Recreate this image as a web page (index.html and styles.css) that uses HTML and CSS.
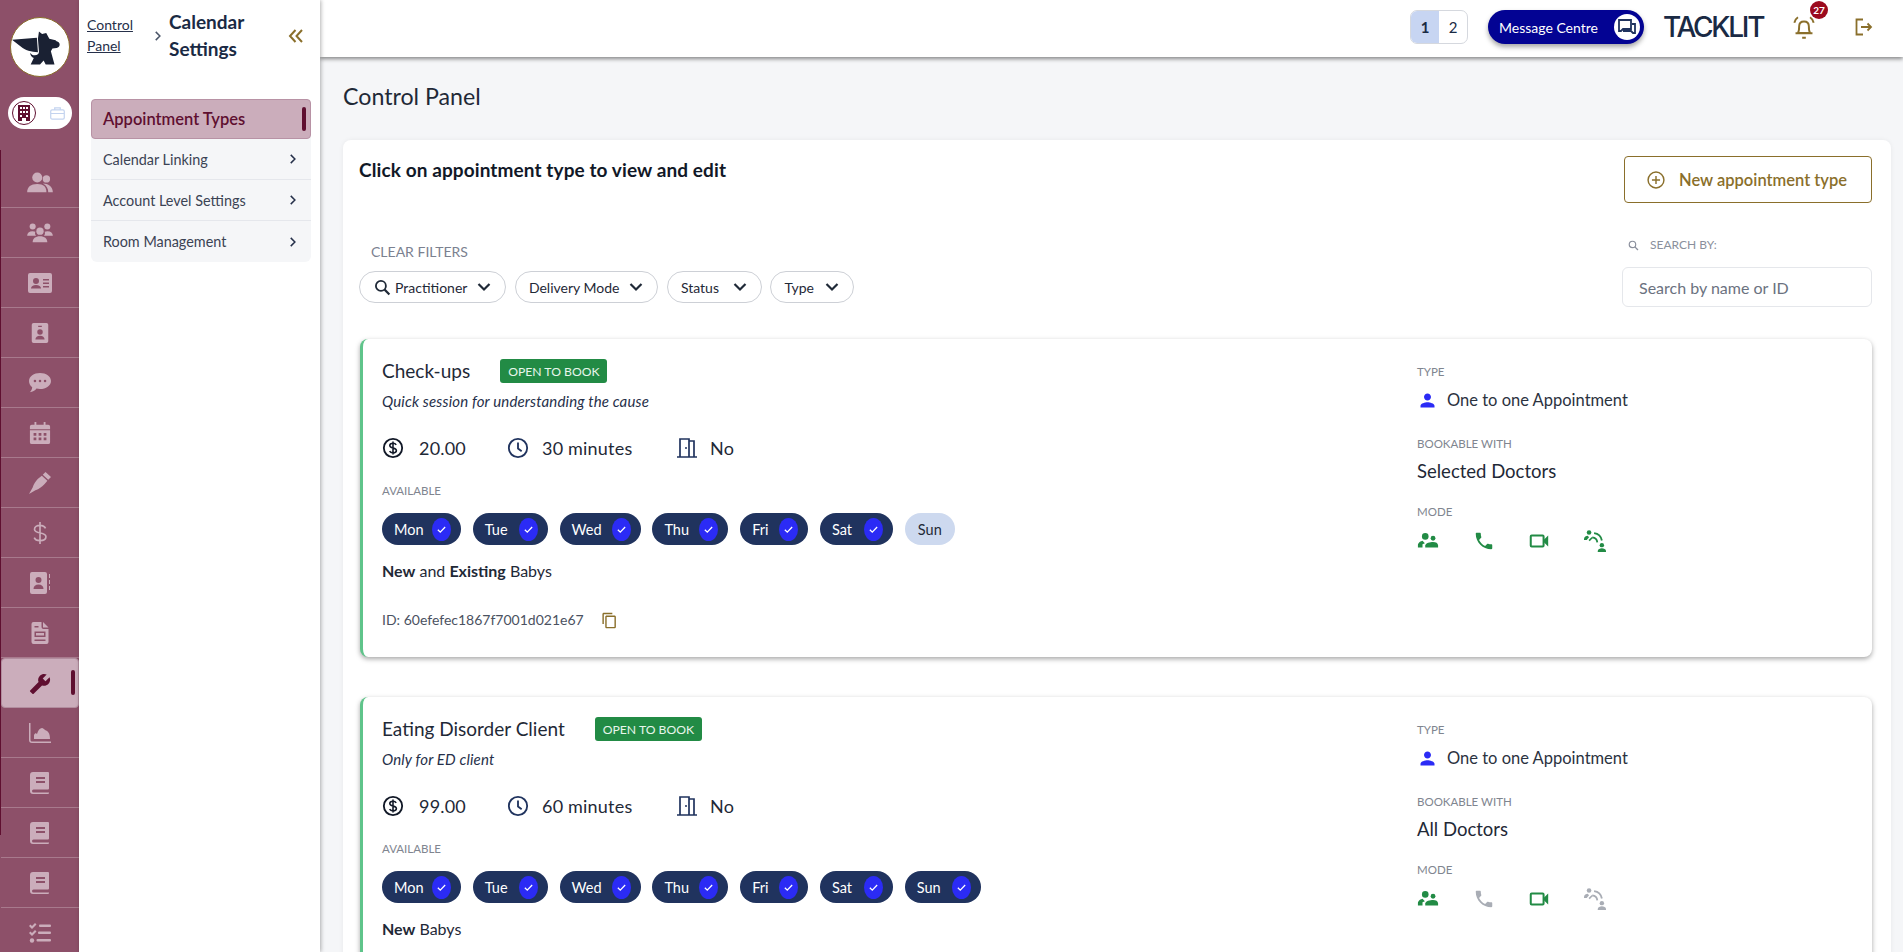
FILE: index.html
```html
<!DOCTYPE html>
<html lang="en">
<head>
<meta charset="utf-8">
<title>Calendar Settings</title>
<link rel="stylesheet" href="styles.css">
</head>
<body>
<svg class="defs" aria-hidden="true">
  <symbol id="i-person" viewBox="0 0 24 24"><path d="M12 12c2.21 0 4-1.79 4-4s-1.79-4-4-4-4 1.79-4 4 1.79 4 4 4zm0 2c-2.67 0-8 1.34-8 4v2h16v-2c0-2.66-5.33-4-8-4z"/></symbol>
  <symbol id="i-phone" viewBox="0 0 24 24"><path d="M6.62 10.79c1.44 2.83 3.76 5.14 6.59 6.59l2.2-2.2c.27-.27.67-.36 1.02-.24 1.12.37 2.33.57 3.57.57.55 0 1 .45 1 1V20c0 .55-.45 1-1 1-9.39 0-17-7.61-17-17 0-.55.45-1 1-1h3.5c.55 0 1 .45 1 1 0 1.25.2 2.45.57 3.57.11.35.03.74-.25 1.02l-2.2 2.2z"/></symbol>
  <symbol id="i-people" viewBox="0 0 24 24"><circle cx="9" cy="7" r="3.6"/><circle cx="17.5" cy="9" r="2.6"/><path d="M1 19v-2.5c0-2.6 3.5-4.5 5-4.7l2.6 2.6-2.6 1.2V19H1z"/><path d="M9 19v-2c0-2.6 5.5-3.8 8.5-3.8S23 14.400 23 17v2H9z"/></symbol>
  <symbol id="i-video" viewBox="0 0 24 24"><rect x="3" y="6" width="14" height="12" rx="1" fill="none" stroke="currentColor" stroke-width="2.200"/><path d="M17 11l5-5v12l-5-5z"/></symbol>
  <symbol id="i-remote" viewBox="0 0 24 24"><circle cx="5.500" cy="2.800" r="2.500"/><path d="M0 11v-1.500c0-2 2.500-3.200 4-3.200l1.500 1.500L3 11H0z"/><path d="M5 11l3.500-3.500 1.200 1.200L6.200 12.200z"/><path d="M11 3.500a10 10 0 0 1 8.500 8M9 8a6 6 0 0 1 5.500 5.500" fill="none" stroke="currentColor" stroke-width="2"/><circle cx="19.500" cy="16.500" r="2.400"/><path d="M15 24v-1c0-2 2.500-3 4.500-3s4.500 1 4.500 3v1z"/></symbol>
  <symbol id="i-check" viewBox="0 0 16 16"><path d="M3.500 8.300l3 3L12.500 5" fill="none" stroke="#fff" stroke-width="1.600"/></symbol>
  <symbol id="i-chev" viewBox="0 0 16 16"><path d="M2.500 5l5.500 5.500L13.500 5" fill="none" stroke="currentColor" stroke-width="2.200"/></symbol>
  <symbol id="i-right" viewBox="0 0 16 16"><path d="M5 2.500l5.500 5.500L5 13.500" fill="none" stroke="currentColor" stroke-width="2"/></symbol>
  <symbol id="i-money" viewBox="0 0 24 24"><circle cx="12" cy="12" r="10" fill="none" stroke="currentColor" stroke-width="2"/><path d="M15.500 8.500c-.7-1.200-2-1.700-3.500-1.700-2 0-3.500 1-3.500 2.600 0 3.600 7.200 1.700 7.200 5.300 0 1.600-1.600 2.600-3.700 2.600-1.600 0-3-.6-3.700-1.900M12 4.800v14.400" fill="none" stroke="currentColor" stroke-width="1.700"/></symbol>
  <symbol id="i-clock" viewBox="0 0 24 24"><circle cx="12" cy="12" r="10" fill="none" stroke="currentColor" stroke-width="2"/><path d="M12 6v6.500l4 3" fill="none" stroke="currentColor" stroke-width="2"/></symbol>
  <symbol id="i-door" viewBox="0 0 20 20"><path d="M0 19h20M3 19V1h9v18M12 3h5v16" fill="none" stroke="currentColor" stroke-width="1.700"/><circle cx="9" cy="10" r="1"/></symbol>
  <symbol id="i-copy" viewBox="0 0 24 24"><path d="M16 1H4c-1.100 0-2 .9-2 2v14h2V3h12V1zm3 4H8c-1.100 0-2 .9-2 2v14c0 1.100.9 2 2 2h11c1.100 0 2-.9 2-2V7c0-1.100-.9-2-2-2zm0 16H8V7h11v14z"/></symbol>
  <symbol id="i-search" viewBox="0 0 16 16"><circle cx="6.500" cy="6.500" r="4.700" fill="none" stroke="currentColor" stroke-width="1.700"/><path d="M10 10l4.500 4.500" stroke="currentColor" stroke-width="2" fill="none"/></symbol>
  <symbol id="r-friends" viewBox="0 0 28 24"><circle cx="11" cy="6" r="5.500"/><circle cx="21" cy="7.500" r="4"/><path d="M0 22c0-6 4-9 11-9s10 3 10 9H0z"/><path d="M17 12.500c6 0 11 3.500 11 9.500h-5c0-4-2-7.500-6-9.500z"/></symbol>
  <symbol id="r-group" viewBox="0 0 28 24"><circle cx="6" cy="5" r="3.300"/><circle cx="22" cy="5" r="3.300"/><circle cx="14" cy="10" r="4"/><path d="M0 15c0-3 2-5 6-5 1 0 2 .2 3 .6-.8 1.300-.5 3 .7 4.400H0zM28 15c0-3-2-5-6-5-1 0-2 .2-3 .6.800 1.300.5 3-.7 4.400H28zM6 22c0-4 3-6.500 8-6.500s8 2.500 8 6.500H6z"/></symbol>
  <symbol id="r-card" viewBox="0 0 24 20"><path fill-rule="evenodd" d="M2 0h20a2 2 0 0 1 2 2v16a2 2 0 0 1-2 2H2a2 2 0 0 1-2-2V2a2 2 0 0 1 2-2zm6 5a3 3 0 1 0 0 6 3 3 0 0 0 0-6zM3 15.500h10c0-2.200-2-3.500-5-3.500s-5 1.300-5 3.500zM15 6v1.500h6V6h-6zm0 3.500V11h6V9.500h-6zm0 3.500v1.500h6V13h-6z"/></symbol>
  <symbol id="r-badge" viewBox="0 0 18 24"><path fill-rule="evenodd" d="M2 1h14a2 2 0 0 1 2 2v18a2 2 0 0 1-2 2H2a2 2 0 0 1-2-2V3a2 2 0 0 1 2-2zm5 3v1.500h4V4H7zm2 4a3 3 0 1 0 0 6 3 3 0 0 0 0-6zm-5 11h10c0-2.500-2-4-5-4s-5 1.500-5 4z"/></symbol>
  <symbol id="r-chat" viewBox="0 0 24 22"><path fill-rule="evenodd" d="M12 0c6.600 0 12 3.800 12 8.800s-5.400 8.800-12 8.800c-1.400 0-2.600-.2-3.800-.5C6.500 19.500 4 20.500.8 21 2.500 19.500 3.300 17.600 3.500 15.500 1.300 13.800 0 11.500 0 8.800 0 3.800 5.400 0 12 0zM6.500 7.500a1.400 1.400 0 1 0 0 2.800 1.400 1.400 0 0 0 0-2.800zm5.500 0a1.400 1.400 0 1 0 0 2.800 1.400 1.400 0 0 0 0-2.800zm5.500 0a1.400 1.400 0 1 0 0 2.800 1.400 1.400 0 0 0 0-2.800z"/></symbol>
  <symbol id="r-cal" viewBox="0 0 22 24"><path fill-rule="evenodd" d="M5 0h2v3h8V0h2v3h3a2 2 0 0 1 2 2v3H0V5a2 2 0 0 1 2-2h3V0zM0 9h22v13a2 2 0 0 1-2 2H2a2 2 0 0 1-2-2V9zm4 3v3h3v-3H4zm5.500 0v3h3v-3h-3zm5.500 0v3h3v-3h-3zM4 17v3h3v-3H4zm5.500 0v3h3v-3h-3zm5.500 0v3h3v-3h-3z"/></symbol>
  <symbol id="r-pen" viewBox="0 0 24 24"><path d="M18 0l6 5.500-3 3-6-5.500 3-3zM14 4l6 5.500c-1 1.500-2.500 3-3.500 4-2.500 2.500-5.500 5-9.500 6.500L0 24l4-7c1-4 3.500-7 5.500-9.500z"/></symbol>
  <symbol id="r-dollar" viewBox="0 0 16 24"><path d="M14 7c-.8-2-3-3.300-6-3.300-3.500 0-6 1.600-6 4.200 0 5.800 12.500 2.500 12.500 8.200 0 2.700-2.800 4.200-6.500 4.200-3 0-5.500-1.300-6.300-3.300M8 0v24" fill="none" stroke="currentColor" stroke-width="1.800"/></symbol>
  <symbol id="r-contact" viewBox="0 0 20 22"><path fill-rule="evenodd" d="M2 0h13a2 2 0 0 1 2 2v18a2 2 0 0 1-2 2H2a2 2 0 0 1-2-2V2a2 2 0 0 1 2-2zm6.500 5a3 3 0 1 0 0 6 3 3 0 0 0 0-6zm-5 12h10c0-2.800-2-4.500-5-4.500s-5 1.700-5 4.500z"/><path d="M19 2h1v4h-1zM19 8h1v4h-1zM19 14h1v4h-1z"/></symbol>
  <symbol id="r-doc" viewBox="0 0 17 22"><path fill-rule="evenodd" d="M2 0h8v5a2 2 0 0 0 2 2h5v13a2 2 0 0 1-2 2H2a2 2 0 0 1-2-2V2a2 2 0 0 1 2-2zm1 4v1.500h4V4H3zm0 5.500V15h11V9.500H3zm1.500 1.500h8v2.500h-8V11zM3 17.500V19h11v-1.500H3z"/><path d="M11.500 0L17 5.500h-5.500z"/></symbol>
  <symbol id="r-wrench" viewBox="0 0 24 24"><path transform="translate(24 0) scale(-1 1)" d="M22.700 19l-9.100-9.100c.9-2.300.4-5-1.500-6.900-2-2-5-2.400-7.400-1.300L9 6 6 9 1.600 4.700C.4 7.100.9 10.100 2.900 12.100c1.900 1.900 4.600 2.400 6.900 1.500l9.100 9.100c.4.400 1 .4 1.400 0l2.300-2.300c.5-.4.500-1.100.1-1.400z"/></symbol>
  <symbol id="r-chart" viewBox="0 0 22 20"><path d="M0 0h1.500v17c0 .8.700 1.500 1.500 1.500h19V20H3a3 3 0 0 1-3-3V0z"/><path d="M5 16v-4c1-2 2-2 3-1 1-4 3-6 5-6 1 0 2 1 3 2 3 1 5 3 5 9H5z"/></symbol>
  <symbol id="r-book" viewBox="0 0 20 22"><path fill-rule="evenodd" d="M3 0h15a1 1 0 0 1 1 1v15.500a1 1 0 0 1-1 1H3.500a1.500 1.500 0 0 0 0 3H19c0 .5 0 1.500-1 1.500H3a3 3 0 0 1-3-3V3a3 3 0 0 1 3-3zm3 5v2h9V5H6zm0 4v2h9V9H6z"/></symbol>
  <symbol id="r-list" viewBox="0 0 22 20"><path d="M0 3l1.500-1.500L3 3l3-3 1.500 1.500L3 6zM0 10l1.500-1.500L3 10l3-3 1.500 1.500L3 13z"/><circle cx="3" cy="17.500" r="2.200"/><rect x="10" y="1.500" width="12" height="2.400" rx="1"/><rect x="9" y="8.500" width="13" height="2.400" rx="1"/><rect x="7.500" y="16" width="14.500" height="2.400" rx="1"/></symbol>
</svg>

<div class="app">
  <aside class="rail">
    <div class="logo">
      <svg viewBox="0 0 56 56" width="58" height="58">
        <path class="logo-dog" d="M1 21L25 19l1 14c-6 0-13-2-16-5z"/>
        <path class="logo-dog" d="M26 20l1-7 3 2.500 4-1 3 5.500 6 1.500 1 1c4 .5 4 6 0 6.500l-4 .5-1.500 2.500L42 45H33.500l-2-4-3.500 4H19l3-6.500c-2-.5-3.500-2.500-3.500-5 1 1.500 2.500 2.500 4.500 2.500 2.500 0 4-1.500 4-3.500z"/>
      </svg>
    </div>
    <div class="org-toggle">
      <span class="org-on">
        <svg viewBox="0 0 12 16" width="12" height="16"><path d="M0 0h12v16H8v-3H4v3H0z" fill="#5f0f30"/><path d="M2 2h2v2H2zM5 2h2v2H5zM8 2h2v2H8zM2 6h2v2H2zM5 6h2v2H5zM8 6h2v2H8zM2 10h2v2H2zM8 10h2v2H8z" fill="#fff"/></svg>
      </span>
      <svg class="org-off" viewBox="0 0 16 14" width="15" height="13"><rect x=".7" y="3" width="14.600" height="10" rx="1.500" fill="none" stroke="currentColor" stroke-width="1.300"/><path d="M5 3V1h6v2M1 7h14" fill="none" stroke="currentColor" stroke-width="1.300"/></svg>
    </div>
    <nav class="rail-nav">
      <a class="rail-item"><svg class="ri ri-26"><use href="#r-friends"/></svg></a>
      <a class="rail-item"><svg class="ri ri-26"><use href="#r-group"/></svg></a>
      <a class="rail-item"><svg class="ri ri-24"><use href="#r-card"/></svg></a>
      <a class="rail-item"><svg class="ri ri-22"><use href="#r-badge"/></svg></a>
      <a class="rail-item"><svg class="ri ri-22"><use href="#r-chat"/></svg></a>
      <a class="rail-item"><svg class="ri ri-22"><use href="#r-cal"/></svg></a>
      <a class="rail-item"><svg class="ri ri-22"><use href="#r-pen"/></svg></a>
      <a class="rail-item"><svg class="ri ri-24"><use href="#r-dollar"/></svg></a>
      <a class="rail-item"><svg class="ri ri-22"><use href="#r-contact"/></svg></a>
      <a class="rail-item"><svg class="ri ri-22"><use href="#r-doc"/></svg></a>
      <a class="rail-item rail-active"><svg class="ri ri-22"><use href="#r-wrench"/></svg></a>
      <a class="rail-item"><svg class="ri ri-22"><use href="#r-chart"/></svg></a>
      <a class="rail-item"><svg class="ri ri-22"><use href="#r-book"/></svg></a>
      <a class="rail-item"><svg class="ri ri-22"><use href="#r-book"/></svg></a>
      <a class="rail-item"><svg class="ri ri-22"><use href="#r-book"/></svg></a>
      <a class="rail-item"><svg class="ri ri-22"><use href="#r-list"/></svg></a>
    </nav>
  </aside>

  <aside class="subnav">
    <div class="crumbs">
      <a class="crumb-link">Control Panel</a>
      <svg class="crumb-sep"><use href="#i-right"/></svg>
      <h2 class="crumb-title">Calendar Settings</h2>
      <svg class="collapse" viewBox="0 0 16 14" width="16" height="14"><path d="M7.500 1L2 7l5.500 6M14 1L8.500 7l5.500 6" fill="none" stroke="currentColor" stroke-width="2"/></svg>
    </div>
    <ul class="menu">
      <li class="menu-item menu-active">Appointment Types</li>
      <li class="menu-item">Calendar Linking<svg class="menu-chev"><use href="#i-right"/></svg></li>
      <li class="menu-item">Account Level Settings<svg class="menu-chev"><use href="#i-right"/></svg></li>
      <li class="menu-item">Room Management<svg class="menu-chev"><use href="#i-right"/></svg></li>
    </ul>
  </aside>

  <div class="main">
    <header class="topbar">
      <div class="page-toggle"><span class="page-on">1</span><span class="page-off">2</span></div>
      <button class="msg-btn">Message Centre
        <span class="msg-icon"><svg viewBox="0 0 18 16" width="18" height="16"><path d="M1 1h12v9H5l-2 2H1zM5 12h8l2 2h2V5h-3" fill="none" stroke="#20335e" stroke-width="1.800"/></svg></span>
      </button>
      <div class="brand">TACKLIT</div>
      <div class="bell">
        <svg viewBox="2 1.500 18 19" width="22" height="23"><path d="M6 15.500c1-1.500 1-3 1-5.500 0-2.500 1.500-4 4-4s4 1.500 4 4c0 2.500 0 4 1 5.500zM4 15.800h14M9.500 19.500h3M3 7c.5-2 1.500-3.500 3-4.500M19 7c-.5-2-1.500-3.500-3-4.500" fill="none" stroke="currentColor" stroke-width="1.600"/></svg>
        <span class="bell-count">27</span>
      </div>
      <svg class="logout" viewBox="0 0 18 18" width="18" height="18"><path d="M8 1.500H1.500v15H8M6 9h10M12.500 5.500L16 9l-3.500 3.500" fill="none" stroke="currentColor" stroke-width="1.800"/></svg>
    </header>

    <main class="content">
      <h1 class="page-title">Control Panel</h1>
      <section class="panel">
        <div class="panel-head">
          <h3 class="panel-title">Click on appointment type to view and edit</h3>
          <button class="new-btn">
            <svg viewBox="0 0 20 20" width="18" height="18"><circle cx="10" cy="10" r="8.800" fill="none" stroke="currentColor" stroke-width="1.600"/><path d="M10 5.500v9M5.500 10h9" stroke="currentColor" stroke-width="1.600" fill="none"/></svg>
            New appointment type
          </button>
        </div>
        <div class="filters">
          <div class="filter-left">
            <div class="clear">CLEAR FILTERS</div>
            <div class="pills">
              <span class="pill pill-search"><svg class="pill-s"><use href="#i-search"/></svg>Practitioner<svg class="pill-c"><use href="#i-chev"/></svg></span>
              <span class="pill">Delivery Mode<svg class="pill-c"><use href="#i-chev"/></svg></span>
              <span class="pill pill-status">Status<svg class="pill-c"><use href="#i-chev"/></svg></span>
              <span class="pill pill-type">Type<svg class="pill-c"><use href="#i-chev"/></svg></span>
            </div>
          </div>
          <div class="filter-right">
            <div class="search-label"><svg class="search-s"><use href="#i-search"/></svg>SEARCH BY:</div>
            <input class="search-input" type="text" placeholder="Search by name or ID">
          </div>
        </div>

        <article class="appt">
          <div class="appt-left">
            <div class="appt-head"><span class="appt-name">Check-ups</span><span class="badge">OPEN TO BOOK</span></div>
            <p class="appt-desc">Quick session for understanding the cause</p>
            <div class="stats">
              <span class="stat stat-price"><svg class="st-i st-money"><use href="#i-money"/></svg>20.00</span>
              <span class="stat stat-time"><svg class="st-i"><use href="#i-clock"/></svg>30 minutes</span>
              <span class="stat"><svg class="st-i st-door"><use href="#i-door"/></svg>No</span>
            </div>
            <div class="cap cap-avail">AVAILABLE</div>
            <div class="days">
              <span class="day d-mon">Mon<i class="tick"><svg><use href="#i-check"/></svg></i></span>
              <span class="day d-tue">Tue<i class="tick"><svg><use href="#i-check"/></svg></i></span>
              <span class="day d-wed">Wed<i class="tick"><svg><use href="#i-check"/></svg></i></span>
              <span class="day d-thu">Thu<i class="tick"><svg><use href="#i-check"/></svg></i></span>
              <span class="day d-fri">Fri<i class="tick"><svg><use href="#i-check"/></svg></i></span>
              <span class="day d-sat">Sat<i class="tick"><svg><use href="#i-check"/></svg></i></span>
              <span class="day day-off">Sun</span>
            </div>
            <p class="clients"><b>New</b> and <b>Existing</b> Babys</p>
            <div class="appt-id">ID: 60efefec1867f7001d021e67<svg class="copy"><use href="#i-copy"/></svg></div>
          </div>
          <div class="appt-right">
            <div class="cap">TYPE</div>
            <div class="type-row"><svg class="type-i"><use href="#i-person"/></svg>One to one Appointment</div>
            <div class="cap cap-book">BOOKABLE WITH</div>
            <div class="bookable">Selected Doctors</div>
            <div class="cap cap-mode">MODE</div>
            <div class="modes">
              <svg class="mode"><use href="#i-people"/></svg>
              <svg class="mode"><use href="#i-phone"/></svg>
              <svg class="mode"><use href="#i-video"/></svg>
              <svg class="mode"><use href="#i-remote"/></svg>
            </div>
          </div>
        </article>

        <article class="appt">
          <div class="appt-left">
            <div class="appt-head"><span class="appt-name">Eating Disorder Client</span><span class="badge">OPEN TO BOOK</span></div>
            <p class="appt-desc">Only for ED client</p>
            <div class="stats">
              <span class="stat stat-price"><svg class="st-i st-money"><use href="#i-money"/></svg>99.00</span>
              <span class="stat stat-time"><svg class="st-i"><use href="#i-clock"/></svg>60 minutes</span>
              <span class="stat"><svg class="st-i st-door"><use href="#i-door"/></svg>No</span>
            </div>
            <div class="cap cap-avail">AVAILABLE</div>
            <div class="days">
              <span class="day d-mon">Mon<i class="tick"><svg><use href="#i-check"/></svg></i></span>
              <span class="day d-tue">Tue<i class="tick"><svg><use href="#i-check"/></svg></i></span>
              <span class="day d-wed">Wed<i class="tick"><svg><use href="#i-check"/></svg></i></span>
              <span class="day d-thu">Thu<i class="tick"><svg><use href="#i-check"/></svg></i></span>
              <span class="day d-fri">Fri<i class="tick"><svg><use href="#i-check"/></svg></i></span>
              <span class="day d-sat">Sat<i class="tick"><svg><use href="#i-check"/></svg></i></span>
              <span class="day d-sun">Sun<i class="tick"><svg><use href="#i-check"/></svg></i></span>
            </div>
            <p class="clients"><b>New</b> Babys</p>
          </div>
          <div class="appt-right">
            <div class="cap">TYPE</div>
            <div class="type-row"><svg class="type-i"><use href="#i-person"/></svg>One to one Appointment</div>
            <div class="cap cap-book">BOOKABLE WITH</div>
            <div class="bookable">All Doctors</div>
            <div class="cap cap-mode">MODE</div>
            <div class="modes">
              <svg class="mode"><use href="#i-people"/></svg>
              <svg class="mode mode-off"><use href="#i-phone"/></svg>
              <svg class="mode"><use href="#i-video"/></svg>
              <svg class="mode mode-off"><use href="#i-remote"/></svg>
            </div>
          </div>
        </article>
      </section>
    </main>
  </div>
</div>
</body>
</html>
```

FILE: styles.css
```css
* { box-sizing: border-box; }
html, body { margin: 0; height: 100%; overflow: hidden; }
body { font-family: "Lato", "Noto Sans", sans-serif; color: #1a2a44; font-size: 14px; }
h1, h2, h3, p, ul { margin: 0; padding: 0; }
.defs { display: none; }
svg { display: block; fill: currentColor; flex: none; }

.app { display: flex; height: 952px; }

/* Rail */
.rail { width: 79px; flex: none; background: #8d5069; display: flex; flex-direction: column; align-items: center; }
.logo { width: 60px; height: 60px; flex: none; margin-top: 17px; border-radius: 50%; background: #fff; border: 1px solid #8a6f2b; display: flex; align-items: center; justify-content: center; }
.logo-dog { fill: #1a2133; }
.org-toggle { width: 64px; height: 32px; flex: none; margin-top: 20px; border-radius: 16px; background: #fff; display: flex; align-items: center; padding-left: 4px; gap: 14px; }
.org-on { width: 24px; height: 24px; border-radius: 50%; border: 1.500px solid #5f0f30; display: flex; align-items: center; justify-content: center; }
.org-off { color: #c3d3ef; }
.rail-nav { position: relative; align-self: stretch; flex: none; margin-top: 21px; padding-top: 8px; }
.rail-nav::before { content: ""; position: absolute; left: 0; top: 0; width: 1px; height: 685px; background: #5f0f30; }
.rail-item { height: 50px; display: flex; align-items: center; justify-content: center; padding-top: 1px; color: #cbadbb; border-bottom: 1px solid #a87a8d; margin-left: 1px; }
.rail-active { background: #cbadbb; color: #5f0f30; border: 1px solid #b28d9e; border-radius: 4px; position: relative; }
.rail-active::after { content: ""; position: absolute; right: 3px; top: 11px; width: 4px; height: 25px; border-radius: 2px; background: #5f0f30; }
.ri-26 { width: 26px; height: 22px; }
.ri-24 { width: 24px; height: 22px; }
.ri-22 { width: 22px; height: 22px; }

/* Subnav */
.subnav { width: 241px; flex: none; background: #fff; box-shadow: 1px 0 4px rgba(0, 0, 0, .3); position: relative; z-index: 2; padding-left: 8px; padding-right: 8px; }
.crumbs { height: 99px; display: flex; align-items: flex-start; padding-top: 8px; }
.crumb-link { width: 56px; font-size: 14px; line-height: 21px; text-decoration: underline; margin-top: 6px; color: #26304a; }
.crumb-sep { width: 12px; height: 12px; margin: 22px 5px 0 9px; color: #4a5568; }
.crumb-title { width: 112px; font-size: 19px; font-weight: 700; line-height: 27px; color: #1a2a44; }
.collapse { color: #8a6f2b; margin: 21px 0 0 7px; }
.menu { list-style: none; margin-left: 4px; width: 220px; background: #f5f6f8; border-radius: 6px; }
.menu-item { height: 41px; display: flex; align-items: center; justify-content: space-between; padding: 0 12px 0 12px; font-size: 14.400px; color: #3b4354; border-bottom: 1px solid #e5e7ec; }
.menu-item:last-child { border-bottom: 0; }
.menu-active { height: 40px; position: relative; background: #cbadbb; border: 1px solid #b892a5; border-radius: 4px; color: #5f0f30; font-size: 16.500px; font-weight: 600; padding-left: 11px; }
.menu-active::after { content: ""; position: absolute; right: 4px; top: 7px; width: 4px; height: 24px; border-radius: 2px; background: #5f0f30; }
.menu-chev { width: 12px; height: 12px; color: #26304a; }

/* Main */
.main { flex: 1; min-width: 0; display: flex; flex-direction: column; background: #f5f6f8; }
.topbar { height: 57px; flex: none; background: #fff; box-shadow: 0 2px 4px rgba(0, 0, 0, .45); position: relative; z-index: 1; display: flex; align-items: flex-start; justify-content: flex-end; padding-right: 30px; padding-top: 10px; }
.page-toggle { width: 58px; height: 34px; display: flex; border: 1px solid #d5d8de; border-radius: 7px; overflow: hidden; font-size: 15px; }
.page-on, .page-off { width: 28px; display: flex; align-items: center; justify-content: center; }
.page-on { background: #c7d5f2; font-weight: 700; }
.msg-btn { margin-left: 20px; width: 156px; height: 34px; border: 0; border-radius: 17px; background: #030393; color: #fff; font: inherit; font-size: 14px; display: flex; align-items: center; justify-content: space-between; padding: 0 4px 0 11px; box-shadow: 0 3px 5px rgba(0, 0, 0, .35); }
.msg-icon { width: 26px; height: 26px; border-radius: 50%; background: #fff; display: flex; align-items: center; justify-content: center; }
.brand { margin-left: 19px; width: 100px; font-family: "Inter", sans-serif; font-size: 28px; font-weight: 500; letter-spacing: -2.300px; line-height: 34px; color: #1a2a44; white-space: nowrap; }
.bell { position: relative; margin-left: 30px; margin-top: 6px; color: #8a6f2b; }
.bell-count { position: absolute; left: 17px; top: -15px; width: 18px; height: 18px; border-radius: 50%; background: #9b0a1e; color: #fff; font-size: 10px; font-weight: 700; text-align: center; line-height: 18px; }
.logout { color: #8a6f2b; margin-left: 40px; margin-top: 8px; }

.content { flex: 1; min-height: 0; padding: 0 12px 0 23px; overflow: hidden; }
.page-title { font-size: 23.200px; font-weight: 400; line-height: 30px; margin-top: 24px; color: #1f2937; }
.panel { margin-top: 29px; background: #fff; border-radius: 8px; padding: 16px 19px 0 16px; box-shadow: 0 0 5px rgba(0, 0, 0, .06); }
.panel-head { display: flex; justify-content: space-between; align-items: flex-start; }
.panel-title { font-size: 19px; font-weight: 700; line-height: 28px; letter-spacing: .1px; color: #111827; }
.new-btn { width: 248px; height: 47px; background: #fff; border: 1px solid #8a6f2b; border-radius: 4px; color: #8a6f2b; font: inherit; font-size: 16.500px; font-weight: 600; display: flex; align-items: center; gap: 14px; padding-left: 22px; }

.filters { display: flex; justify-content: space-between; align-items: flex-end; margin-top: 34px; }
.clear { font-size: 14px; line-height: 20px; color: #7b8190; margin-left: 12px; margin-bottom: 9px; }
.pills { display: flex; gap: 8.500px; margin-bottom: 4px; }
.pill { height: 32px; display: flex; align-items: center; border: 1px solid #cdd0d6; border-radius: 16px; padding: 0 13px 0 13px; font-size: 14px; gap: 9px; color: #1f2937; }
.pill-search { padding-left: 14px; gap: 3px; }
.pill-status, .pill-type { justify-content: space-between; }
.pill-status { width: 95px; }
.pill-type { width: 84px; }
.pill-s { width: 17px; height: 17px; margin-right: 1px; }
.pill-c { width: 16px; height: 16px; }
.pill-search .pill-c { margin-left: 6px; }
.filter-right { width: 250px; }
.search-label { display: flex; align-items: center; gap: 11px; font-size: 12px; color: #8a8f9c; line-height: 16px; margin: 0 0 14px 6px; }
.search-s { width: 11px; height: 11px; }
.search-input { display: block; width: 250px; height: 40px; border: 1px solid #e5e7eb; border-radius: 6px; padding: 0 16px; font: inherit; font-size: 16px; background: #fff; }
.search-input::placeholder { color: #6b7280; opacity: 1; }

.appt { display: flex; justify-content: space-between; margin: 32px 0 40px 1px; border-left: 3px solid #5fc48a; border-radius: 8px; background: #fff; box-shadow: 0 2px 5px rgba(0, 0, 0, .35); padding: 20px 0 28px 19px; height: 318px; }
.appt + .appt { margin-top: 0; }
.appt-left { flex: 1; min-width: 0; }
.appt-right { width: 455px; padding-top: 5px; }
.appt-head { display: flex; align-items: center; height: 24px; gap: 30px; }
.appt-name { font-size: 19px; line-height: 24px; color: #1f2937; }
.badge { height: 24px; display: flex; align-items: center; padding: 0 8px; background: #228b45; border-radius: 3px; color: #e8f6ec; font-size: 12.200px; }
.appt-desc { margin-top: 8px; font-size: 15px; font-style: italic; line-height: 20px; letter-spacing: .15px; color: #26304a; }
.stats { display: flex; height: 24px; margin-top: 25px; font-size: 18px; line-height: 24px; letter-spacing: .2px; }
.stat { display: flex; align-items: center; gap: 13px; color: #1f2937; }
.stat-price { width: 125px; gap: 15px; }
.stat-time { width: 170px; }
.st-i { width: 22px; height: 22px; color: #20335e; }
.st-money { color: #111827; }
.st-door { width: 20px; height: 20px; }
.cap { font-size: 11.500px; line-height: 16px; color: #80858f; }
.cap-avail { margin-top: 23px; }
.days { display: flex; gap: 11.800px; margin-top: 14px; }
.day { height: 32px; display: flex; align-items: center; justify-content: space-between; padding: 0 10px 0 12px; background: #20335e; color: #fff; border-radius: 16px; font-size: 14.500px; }
.d-mon { width: 79px; }
.d-tue { width: 75px; }
.d-wed { width: 81px; }
.d-thu { width: 76px; }
.d-fri { width: 68px; }
.d-sat { width: 73px; }
.d-sun { width: 76px; }
.day-off { width: 50px; background: #cdd9ef; color: #1f2937; justify-content: center; padding: 0; }
.tick { width: 19px; height: 23px; border-radius: 50%; background: #2b2bf5; display: flex; align-items: center; justify-content: center; }
.tick svg { width: 13px; height: 13px; }
.clients { margin-top: 16px; font-size: 16px; line-height: 20px; color: #1f2937; }
.appt-id { margin-top: 29px; display: flex; align-items: center; gap: 17px; font-size: 14px; line-height: 20px; color: #4b5261; }
.copy { width: 17px; height: 17px; color: #8a6f2b; }
.type-row { display: flex; align-items: center; gap: 9px; margin-top: 8px; font-size: 16.500px; line-height: 24px; color: #2b3240; }
.type-i { width: 21px; height: 21px; color: #2b2bf5; }
.cap-book { margin-top: 24px; }
.bookable { margin-top: 6px; font-size: 18.500px; line-height: 26px; color: #1f2937; }
.cap-mode { margin-top: 20px; }
.modes { display: flex; gap: 33.500px; margin-top: 10px; }
.mode { width: 22px; height: 22px; color: #228b45; }
.mode-off { color: #a9adb5; }
```
